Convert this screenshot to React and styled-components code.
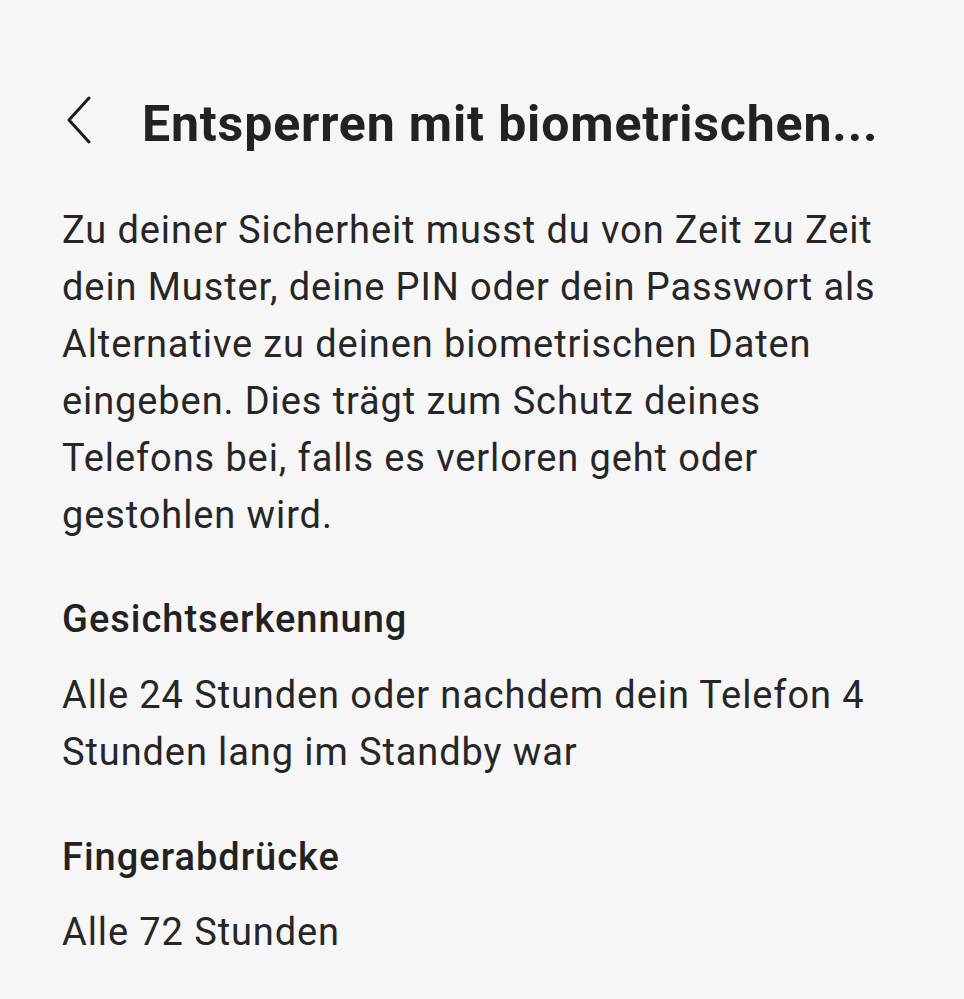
import React from "react";
import styled, { createGlobalStyle } from "styled-components";

const Global = createGlobalStyle`
  html, body { margin: 0; padding: 0; background: #f6f6f6; }
  body { font-family: Roboto, "Noto Sans", "Liberation Sans", sans-serif; color: #232323; }
`;

const Page = styled.div`
  min-height: 999px;
  box-sizing: border-box;
  padding: 94px 62px 0 62px;
  background: #f6f6f6;
`;

const Header = styled.header`
  display: flex;
  align-items: center;
  height: 60px;
  margin-bottom: 48px;
`;

const BackButton = styled.button`
  display: flex;
  align-items: center;
  justify-content: flex-start;
  width: 80px;
  height: 60px;
  padding: 0 0 8px 4px;
  margin: 0;
  border: none;
  background: transparent;
  color: #1c1c1c;
  box-sizing: border-box;
`;

const Title = styled.h1`
  margin: 0;
  font-size: 50px;
  line-height: 60px;
  font-weight: 700;
  letter-spacing: 0.85px;
  white-space: nowrap;
  color: #222;
`;

const Paragraph = styled.p`
  margin: 0 0 ${(p) => p.$after || 0}px;
  font-size: 38px;
  line-height: 57px;
  font-weight: 400;
  letter-spacing: 0.9px;
  color: #262626;
`;

const SectionTitle = styled.h2`
  margin: 0 0 ${(p) => p.$after || 0}px;
  font-size: 38px;
  line-height: 57px;
  font-weight: 500;
  letter-spacing: 1px;
  color: #222;
`;

const Chevron = () => (
  <svg width="26" height="48" viewBox="0 0 26 48" fill="none">
    <path d="M23 2 L3 24 L23 46" stroke="currentColor" strokeWidth="3" strokeLinecap="round" strokeLinejoin="round" />
  </svg>
);

export default function App() {
  return (
    <>
      <Global />
      <Page>
        <Header>
          <BackButton aria-label="Zurück">
            <Chevron />
          </BackButton>
          <Title>Entsperren mit biometrischen...</Title>
        </Header>
        <Paragraph $after={47}>
          Zu deiner Sicherheit musst du von Zeit zu Zeit dein Muster, deine PIN oder dein Passwort als
          Alternative zu deinen biometrischen Daten eingeben. Dies trägt zum Schutz deines Telefons bei,
          falls es verloren geht oder gestohlen wird.
        </Paragraph>
        <SectionTitle $after={19}>Gesichtserkennung</SectionTitle>
        <Paragraph $after={48}>
          Alle 24 Stunden oder nachdem dein Telefon 4 Stunden lang im Standby war
        </Paragraph>
        <SectionTitle $after={18}>Fingerabdrücke</SectionTitle>
        <Paragraph>Alle 72 Stunden</Paragraph>
      </Page>
    </>
  );
}
